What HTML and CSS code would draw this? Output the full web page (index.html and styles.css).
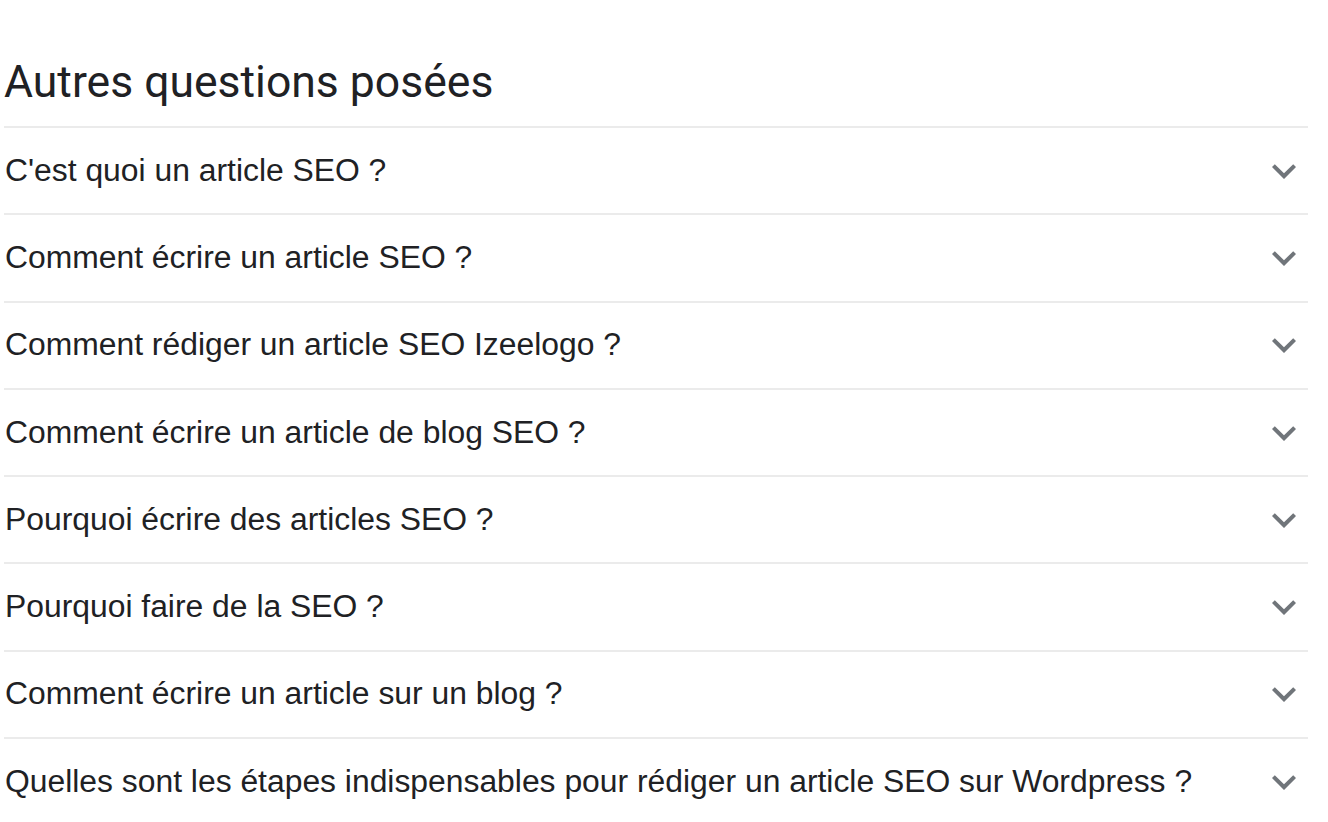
FILE: index.html
```html
<!DOCTYPE html>
<html lang="fr">
<head>
    <meta charset="UTF-8">
    <meta name="viewport" content="width=device-width, initial-scale=1.0">
    <title>Autres questions posées</title>
    <link rel="stylesheet" href="styles.css">
</head>
<body>
    <div class="paa">
        <h2 class="paa-title">Autres questions posées</h2>
        <div class="paa-list">
            <div class="paa-item">
                <span class="paa-question">C'est quoi un article SEO ?</span>
                <svg class="chevron" viewBox="0 0 24 24"><path d="M16.59 8.59L12 13.17 7.41 8.59 6 10l6 6 6-6z"/></svg>
            </div>
            <div class="paa-item">
                <span class="paa-question">Comment écrire un article SEO ?</span>
                <svg class="chevron" viewBox="0 0 24 24"><path d="M16.59 8.59L12 13.17 7.41 8.59 6 10l6 6 6-6z"/></svg>
            </div>
            <div class="paa-item">
                <span class="paa-question">Comment rédiger un article SEO Izeelogo ?</span>
                <svg class="chevron" viewBox="0 0 24 24"><path d="M16.59 8.59L12 13.17 7.41 8.59 6 10l6 6 6-6z"/></svg>
            </div>
            <div class="paa-item">
                <span class="paa-question">Comment écrire un article de blog SEO ?</span>
                <svg class="chevron" viewBox="0 0 24 24"><path d="M16.59 8.59L12 13.17 7.41 8.59 6 10l6 6 6-6z"/></svg>
            </div>
            <div class="paa-item">
                <span class="paa-question">Pourquoi écrire des articles SEO ?</span>
                <svg class="chevron" viewBox="0 0 24 24"><path d="M16.59 8.59L12 13.17 7.41 8.59 6 10l6 6 6-6z"/></svg>
            </div>
            <div class="paa-item">
                <span class="paa-question">Pourquoi faire de la SEO ?</span>
                <svg class="chevron" viewBox="0 0 24 24"><path d="M16.59 8.59L12 13.17 7.41 8.59 6 10l6 6 6-6z"/></svg>
            </div>
            <div class="paa-item">
                <span class="paa-question">Comment écrire un article sur un blog ?</span>
                <svg class="chevron" viewBox="0 0 24 24"><path d="M16.59 8.59L12 13.17 7.41 8.59 6 10l6 6 6-6z"/></svg>
            </div>
            <div class="paa-item">
                <span class="paa-question">Quelles sont les étapes indispensables pour rédiger un article SEO sur Wordpress ?</span>
                <svg class="chevron" viewBox="0 0 24 24"><path d="M16.59 8.59L12 13.17 7.41 8.59 6 10l6 6 6-6z"/></svg>
            </div>
        </div>
    </div>
</body>
</html>
```

FILE: styles.css
```css
body {
    margin: 0;
    background: #fff;
    color: #202124;
    font-family: "Liberation Sans", Arial, sans-serif;
}
.paa {
    width: 1304px;
    margin-left: 4px;
}
.paa-title {
    margin: 0;
    height: 126px;
    padding-top: 56px;
    box-sizing: border-box;
    font-family: Roboto, "Open Sans", sans-serif;
    font-weight: 400;
    font-size: 44.5px;
    line-height: 52px;
    color: #202124;
}
.paa-item {
    display: flex;
    align-items: center;
    justify-content: space-between;
    height: 87.3px;
    box-sizing: border-box;
    border-top: 2px solid #ebebeb;
}
.paa-question {
    font-size: 31.85px;
    line-height: 40px;
    padding-left: 1px;
    margin-top: -2px;
}
.chevron {
    width: 48px;
    height: 48px;
    fill: #70757a;
}
```
